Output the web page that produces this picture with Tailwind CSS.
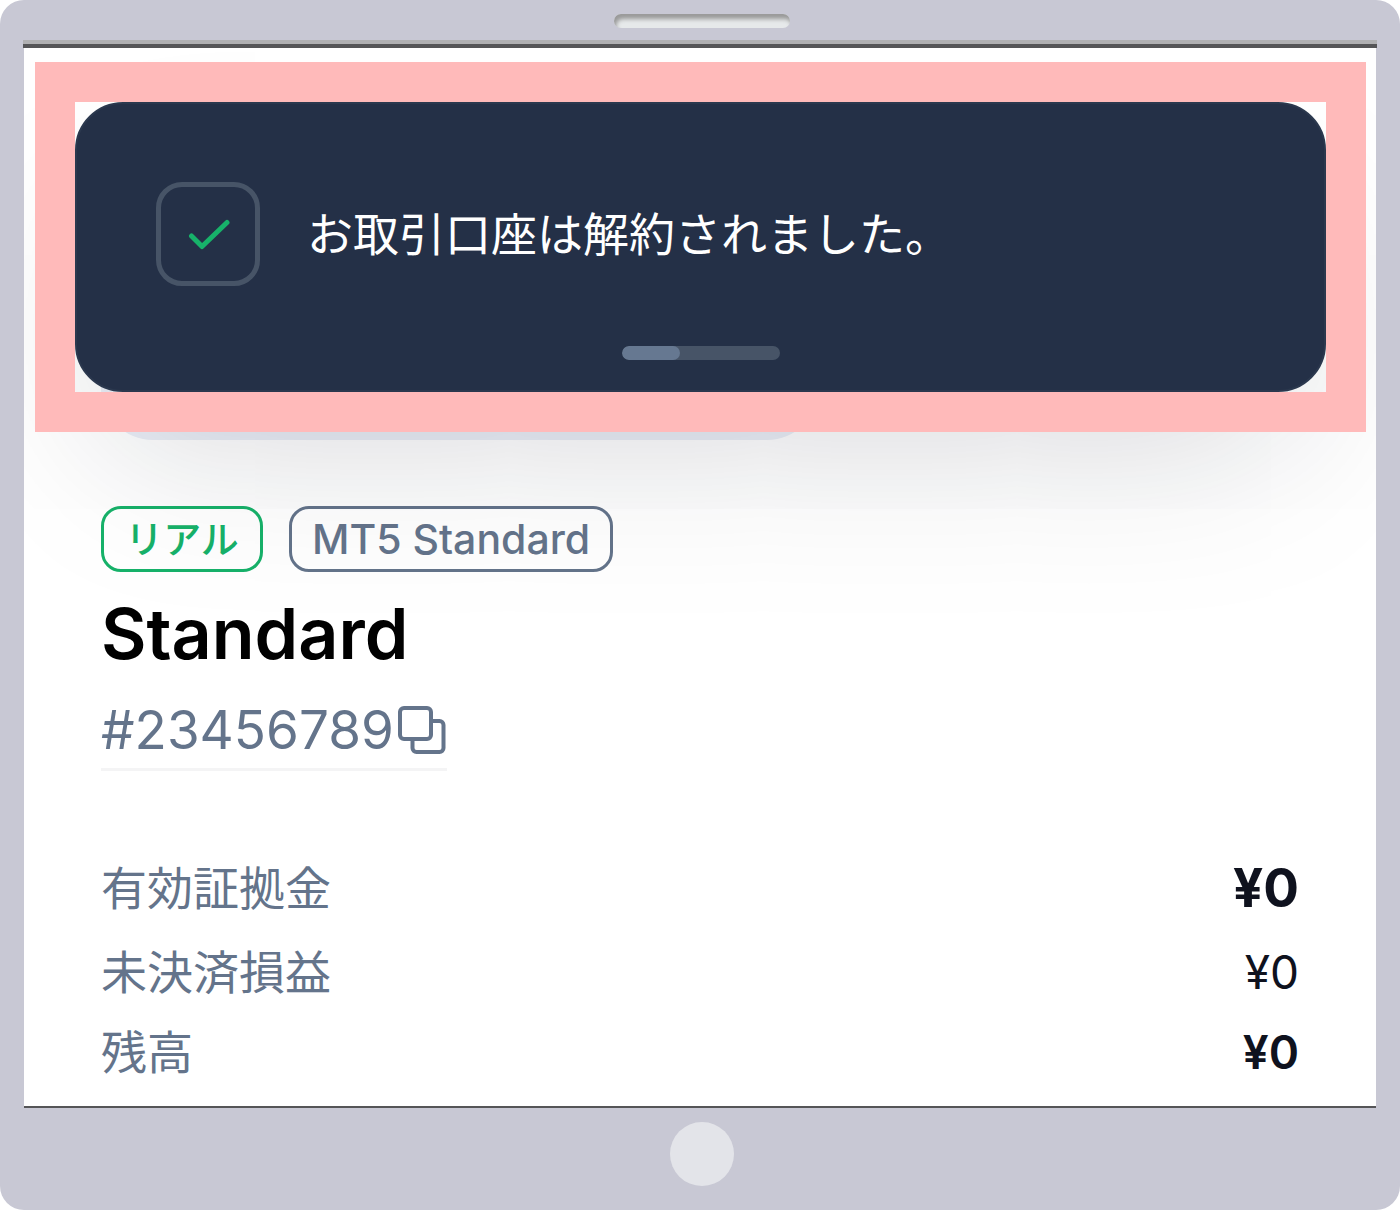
<!DOCTYPE html>
<html lang="ja">
  <head>
    <meta charset="UTF-8" />
    <meta name="viewport" content="width=device-width, initial-scale=1.0" />
    <title>Standard #23456789</title>
    <script src="https://cdn.jsdelivr.net/npm/@tailwindcss/browser@4"></script>
  </head>
  <body class="bg-white font-['Inter','Noto_Sans_CJK_JP',sans-serif]">
    <!-- Device frame -->
    <div class="min-h-screen flex flex-col bg-[#c8c8d4] rounded-3xl">
      <div class="h-10 pl-1 pt-[14px] flex justify-center">
        <div class="w-44 h-[14px] rounded-full bg-[#e6e9ea] shadow-[inset_2px_5px_4px_#999999]"></div>
      </div>
      <div class="mx-[23px] h-2 bg-[#555557] border-t-4 border-[#b0b0b2]"></div>

      <!-- Screen -->
      <main class="flex-1 mx-6 bg-white border-b-2 border-[#555557] overflow-hidden">
        <!-- Toast -->
        <div class="relative z-10 mt-[54px] ml-[51px] mr-[50px] outline-40 outline-[#ffbaba]">
          <div
            role="status"
            class="rounded-[48px] border-2 border-[#2b384e] bg-[#243047] px-[79px] pt-[78px] pb-[30px] shadow-[0_84px_180px_-36px_rgba(16,24,40,0.18)]"
          >
            <div class="flex items-center gap-[47px]">
              <div class="size-[104px] shrink-0 flex items-center justify-center rounded-[26px] border-5 border-[#475467]">
                <svg class="w-11 h-8" viewBox="0 0 44 32" fill="none" stroke="#17b26a" stroke-width="5" stroke-linecap="round" stroke-linejoin="round">
                  <path d="M5.500 18 16 28.500 41 4.500" />
                </svg>
              </div>
              <p class="text-[46px] leading-[66px] text-white">お取引口座は解約されました。</p>
            </div>
            <div
              role="progressbar"
              aria-valuenow="37"
              aria-valuemin="0"
              aria-valuemax="100"
              class="mx-auto mt-[60px] w-[158px] h-[14px] rounded-full bg-[#475467] overflow-hidden"
            >
              <div class="h-full rounded-full bg-[#667891]" style="width: 37%"></div>
            </div>
          </div>
        </div>

        <!-- Account -->
        <section class="px-[77px]">
          <div class="-mt-14 w-[718px] h-[104px] rounded-full bg-[#ebeff7]"></div>

          <div class="mt-[66px] flex gap-[26px] leading-[60px] font-medium">
            <span class="w-[162px] text-center text-[38px] rounded-[20px] border-3 border-[#17b26a] text-[#17b26a]">リアル</span>
            <span class="px-5 text-[41px] rounded-[20px] border-3 border-[#64748b] text-[#64748b]">MT5 Standard</span>
          </div>

          <h1 class="mt-[22px] text-[70px] leading-[80px] font-semibold text-black">Standard</h1>

          <div class="mt-[18px] inline-flex items-center gap-[3px] border-b-3 border-[#f4f4f5] text-[#64748b]">
            <span class="text-[53px] leading-[76px]">#23456789</span>
            <button type="button" aria-label="コピー">
              <svg class="size-[50px]" viewBox="0 0 50 50" fill="none" stroke="currentColor" stroke-width="4" stroke-linejoin="round">
                <rect x="3" y="3" width="31" height="31" rx="4" />
                <path d="M34 16h8.500a4 4 0 0 1 4 4v23a4 4 0 0 1-4 4h-23a4 4 0 0 1-4-4V34" />
              </svg>
            </button>
          </div>

          <!-- Balances -->
          <dl class="mt-20 space-y-[14px] text-[46px] leading-[66px]">
            <div class="h-[74px] flex justify-between items-center">
              <dt class="text-[#64748b]">有効証拠金</dt>
              <dd class="text-[53px] font-bold text-[#0f121e]">¥0</dd>
            </div>
            <div class="flex justify-between items-center">
              <dt class="text-[#64748b]">未決済損益</dt>
              <dd class="text-[#0f121e]">¥0</dd>
            </div>
            <div class="flex justify-between items-center">
              <dt class="text-[#64748b]">残高</dt>
              <dd class="font-semibold text-[#0f121e]">¥0</dd>
            </div>
          </dl>
        </section>
      </main>

      <!-- Home button -->
      <div class="h-[102px] pl-1 pt-[14px] flex justify-center">
        <div class="size-16 rounded-full bg-[#e3e4e9]"></div>
      </div>
    </div>
  </body>
</html>
